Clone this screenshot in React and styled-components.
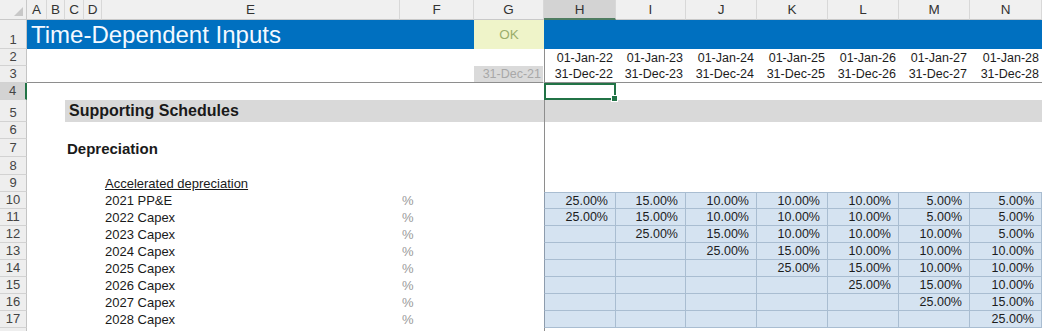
import React from "react";
import styled, { createGlobalStyle, css } from "styled-components";

const GlobalStyle = createGlobalStyle`
  html, body {
    margin: 0;
    background: #fff;
    overflow: hidden;
  }
  body {
    font-family: "Liberation Sans", Arial, sans-serif;
  }
`;

// row header + columns A..N
const TEMPLATE =
  "27px 20px 18px 19px 18px 298px 74px 70px 72px 70px 71px 71px 71px 71px 72px";

const LETTERS = ["A", "B", "C", "D", "E", "F", "G", "H", "I", "J", "K", "L", "M", "N"];
const YEARS = ["22", "23", "24", "25", "26", "27", "28"];

const SCHEDULE = [
  ["2021 PP&E", [25, 15, 10, 10, 10, 5, 5]],
  ["2022 Capex", [25, 15, 10, 10, 10, 5, 5]],
  ["2023 Capex", [null, 25, 15, 10, 10, 10, 5]],
  ["2024 Capex", [null, null, 25, 15, 10, 10, 10]],
  ["2025 Capex", [null, null, null, 25, 15, 10, 10]],
  ["2026 Capex", [null, null, null, null, 25, 15, 10]],
  ["2027 Capex", [null, null, null, null, null, 25, 15]],
  ["2028 Capex", [null, null, null, null, null, null, 25]],
];

const Sheet = styled.div`
  width: 1042px;
  height: 331px;
  overflow: hidden;
  color: #1a1a1a;
`;

const Row = styled.div`
  display: grid;
  grid-template-columns: ${TEMPLATE};
  height: ${(p) => p.$h}px;
  ${(p) =>
    p.$rule &&
    css`
      & > *:not(:first-child) {
        border-bottom: 1px solid #8e8e8e;
      }
    `}
`;

const Corner = styled.div`
  position: relative;
  box-sizing: border-box;
  background: #f0f0f0;
  border-right: 1px solid #c9c9c9;
  border-bottom: 1px solid #c9c9c9;

  &::after {
    content: "";
    position: absolute;
    right: 3px;
    bottom: 3px;
    border-left: 9px solid transparent;
    border-bottom: 9px solid #c8c8c8;
  }
`;

const ColHead = styled.div`
  display: flex;
  align-items: center;
  justify-content: center;
  box-sizing: border-box;
  background: ${(p) => (p.$active ? "#d3d3d3" : "#f0f0f0")};
  border-right: 1px solid #d8d8d8;
  border-bottom: ${(p) => (p.$active ? "2px solid #4f7d62" : "1px solid #c9c9c9")};
  font-size: 13.5px;
  color: #333;
`;

const RowNum = styled.div`
  display: flex;
  align-items: flex-end;
  justify-content: center;
  box-sizing: border-box;
  padding-bottom: 1px;
  background: ${(p) => (p.$active ? "#d3d3d3" : "#eeeeee")};
  border-right: ${(p) => (p.$active ? "2px solid #217346" : "1px solid #c4c4c4")};
  border-bottom: 1px solid #d2d2d2;
  font-size: 13px;
  line-height: 15px;
  color: #444;
  overflow: hidden;
`;

const Cell = styled.div`
  grid-column: span ${(p) => p.$span || 1};
  min-width: 0;
  box-sizing: border-box;
  display: flex;
  align-items: center;
  white-space: nowrap;
  font-size: 13px;
`;

const Blank = styled(Cell)`
  border-left: ${(p) => (p.$freeze ? "1px solid #8e8e8e" : "none")};
`;

const TitleCell = styled(Cell)`
  background: #0070c0;
  color: #f4f9ff;
  font-size: 24px;
  padding-left: 4px;
`;

const BlueFill = styled(Cell)`
  background: #0070c0;
`;

const OkCell = styled(Cell)`
  justify-content: center;
  background: #eff4c9;
  color: #9bae6c;
  font-size: 13.5px;
`;

const DateCell = styled(Cell)`
  justify-content: flex-end;
  padding-right: 3px;
  font-size: 12.5px;
  color: #1c1c1c;
  border-left: ${(p) => (p.$freeze ? "1px solid #8e8e8e" : "none")};
`;

const StubDate = styled(DateCell)`
  background: #dadada;
  color: #a8a8a8;
  padding-right: 2px;
  border-right: 1px solid #ffffff;
`;

const SelectedCell = styled(Cell)`
  position: relative;
  border: 2px solid #217346;

  &::after {
    content: "";
    position: absolute;
    right: -4px;
    bottom: -4px;
    width: 5px;
    height: 5px;
    background: #217346;
    border: 1px solid #fff;
  }
`;

const SectionBand = styled(Cell)`
  background: #d9d9d9;
  font-weight: bold;
  font-size: 16px;
  padding-left: 4px;
  border-left: ${(p) => (p.$freeze ? "1px solid #8e8e8e" : "none")};
`;

const Heading = styled(Cell)`
  font-weight: bold;
  font-size: 15px;
  padding-left: 2px;
  overflow: visible;
`;

const SubHeading = styled(Cell)`
  padding-left: 3px;
  text-decoration: underline;
`;

const Label = styled(Cell)`
  padding-left: 3px;
`;

const Unit = styled(Cell)`
  padding-left: 2px;
  color: #9a9a9a;
`;

const InputCell = styled(Cell)`
  justify-content: flex-end;
  padding-right: 7px;
  background: #d5e3f1;
  font-size: 12.5px;
  color: #1c1c1c;
  border-right: 1px solid #a9bdd1;
  border-bottom: 1px solid #a9bdd1;
  border-left: ${(p) => (p.$first ? "1px solid #8d9cad" : "none")};
  border-top: ${(p) => (p.$top ? "1px solid #a9bdd1" : "none")};
`;

const pct = (v) => (v == null ? "" : `${v.toFixed(2)}%`);

export default function App() {
  return (
    <>
      <GlobalStyle />
      <Sheet>
        <Row $h={20}>
          <Corner />
          {LETTERS.map((l) => (
            <ColHead key={l} $active={l === "H"}>
              {l}
            </ColHead>
          ))}
        </Row>

        <Row $h={29}>
          <RowNum>1</RowNum>
          <TitleCell $span={6}>Time-Dependent Inputs</TitleCell>
          <OkCell>OK</OkCell>
          <BlueFill $span={7} />
        </Row>

        <Row $h={17}>
          <RowNum>2</RowNum>
          <Blank $span={7} />
          {YEARS.map((y, i) => (
            <DateCell key={y} $freeze={i === 0}>
              01-Jan-{y}
            </DateCell>
          ))}
        </Row>

        <Row $h={17} $rule>
          <RowNum>3</RowNum>
          <Blank $span={6} />
          <StubDate>31-Dec-21</StubDate>
          {YEARS.map((y, i) => (
            <DateCell key={y} $freeze={i === 0}>
              31-Dec-{y}
            </DateCell>
          ))}
        </Row>

        <Row $h={17}>
          <RowNum $active>4</RowNum>
          <Blank $span={7} />
          <SelectedCell />
          <Blank $span={6} />
        </Row>

        <Row $h={22}>
          <RowNum>5</RowNum>
          <Blank $span={2} />
          <SectionBand $span={5}>Supporting Schedules</SectionBand>
          <SectionBand $span={7} $freeze />
        </Row>

        <Row $h={17}>
          <RowNum>6</RowNum>
          <Blank $span={7} />
          <Blank $span={7} $freeze />
        </Row>

        <Row $h={18}>
          <RowNum>7</RowNum>
          <Blank $span={2} />
          <Heading $span={5}>Depreciation</Heading>
          <Blank $span={7} $freeze />
        </Row>

        <Row $h={18}>
          <RowNum>8</RowNum>
          <Blank $span={7} />
          <Blank $span={7} $freeze />
        </Row>

        <Row $h={17}>
          <RowNum>9</RowNum>
          <Blank $span={4} />
          <SubHeading>Accelerated depreciation</SubHeading>
          <Blank $span={2} />
          <Blank $span={7} $freeze />
        </Row>

        {SCHEDULE.map(([label, values], r) => (
          <Row $h={17} key={label}>
            <RowNum>{10 + r}</RowNum>
            <Blank $span={4} />
            <Label>{label}</Label>
            <Unit>%</Unit>
            <Blank />
            {values.map((v, c) => (
              <InputCell key={c} $first={c === 0} $top={r === 0}>
                {pct(v)}
              </InputCell>
            ))}
          </Row>
        ))}

        <Row $h={17}>
          <RowNum />
          <Blank $span={7} />
          <Blank $span={7} $freeze />
        </Row>
      </Sheet>
    </>
  );
}
